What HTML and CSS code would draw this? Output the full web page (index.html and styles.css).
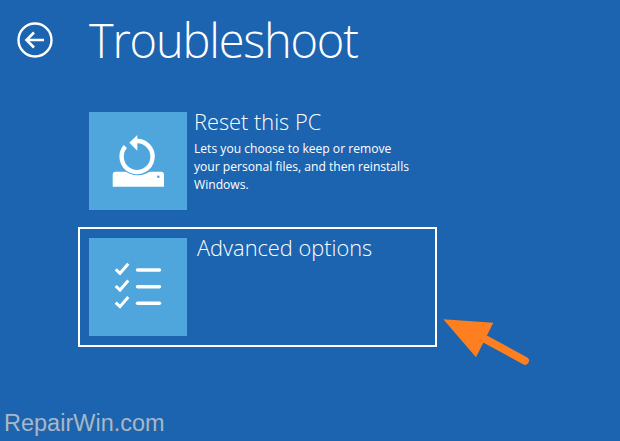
FILE: index.html
```html
<!DOCTYPE html>
<html lang="en">
<head>
  <meta charset="UTF-8">
  <title>Troubleshoot</title>
  <link rel="stylesheet" href="styles.css">
</head>
<body>

  <div class="header">
    <svg class="back" width="36" height="36" viewBox="0 0 36 36">
      <circle cx="18" cy="18" r="16.5" fill="none" stroke="#fff" stroke-width="2.4"/>
      <path d="M27 18H10M17 10.5L9.5 18l7.5 7.5" fill="none" stroke="#fff" stroke-width="2.6"/>
    </svg>
    <h1>Troubleshoot</h1>
  </div>

  <div class="options">
    <div class="option">
      <div class="tile">
        <svg width="98" height="98" viewBox="0 0 98 98">
          <path d="M26.700 59.700H72a3 3 0 0 1 3 3V74.700H23.700V62.700a3 3 0 0 1 3-3z" fill="#fff"/>
          <circle cx="48.700" cy="42.300" r="21" fill="#4ea6dc"/>
          <circle cx="69.300" cy="64.700" r="1.300" fill="#4ea6dc"/>
          <path d="M46 29.200A15.500 15.500 0 1 1 36.300 34.500" fill="none" stroke="#fff" stroke-width="4.400"/>
          <path d="M40.300 30.700L48.300 23V38.700z" fill="#fff"/>
        </svg>
      </div>
      <div class="text">
        <h2>Reset this PC</h2>
        <p>Lets you choose to keep or remove<br>your personal files, and then reinstalls<br>Windows.</p>
      </div>
    </div>

    <div class="option selected">
      <div class="tile">
        <svg width="98" height="98" viewBox="0 0 98 98">
          <g fill="none" stroke="#fff" stroke-width="3">
            <path d="M26.700 31.300L31 35.300 39.300 25.700"/>
            <path d="M26.700 48L31 52 39.300 42.400"/>
            <path d="M26.700 64.700L31 68.700 39.300 59.100"/>
          </g>
          <g fill="none" stroke="#fff" stroke-width="3.400" stroke-linecap="round">
            <path d="M48.500 32H70.500"/>
            <path d="M48.500 48.700H70.500"/>
            <path d="M48.500 65.300H70.500"/>
          </g>
        </svg>
      </div>
      <div class="text">
        <h2>Advanced options</h2>
      </div>
    </div>
  </div>

  <!-- Arrow drawn over the screenshot -->
  <svg class="arrow" width="100" height="60" viewBox="0 0 100 60">
    <path d="M3.300 9.300L53.300 12.700 36 47.300z" fill="#fd7f20"/>
    <path d="M45 29L85 50.700" fill="none" stroke="#fd7f20" stroke-width="8" stroke-linecap="round"/>
  </svg>

  <div class="watermark">RepairWin.com</div>

</body>
</html>
```

FILE: styles.css
```css
body {
  margin: 0;
  height: 441px;
  overflow: hidden;
  position: relative;
  background: #1c64b0;
  color: #fff;
  font-family: "Open Sans", sans-serif;
}

.header {
  display: flex;
  align-items: center;
  gap: 36px;
  height: 80px;
  padding-left: 17px;
}

.back {
  flex: none;
}

h1 {
  margin: 0;
  font-size: 47px;
  font-weight: 300;
  letter-spacing: -1.2px;
  line-height: 80px;
}

.options {
  display: flex;
  flex-direction: column;
  align-items: flex-start;
  gap: 17px;
  margin-top: 32px;
  padding-left: 78px;
}

.option {
  display: flex;
  gap: 7px;
  margin-left: 11px;
}

.option.selected {
  box-sizing: border-box;
  width: 359px;
  height: 120px;
  gap: 10px;
  margin-left: 0;
  padding: 9px;
  border: 2px solid #fff;
}

.tile {
  width: 98px;
  height: 98px;
  background: #4ea6dc;
}

.tile svg {
  display: block;
}

h2 {
  margin: -1px 0 0;
  font-size: 21.8px;
  font-weight: 300;
  line-height: 22px;
}

p {
  margin: 7px 0 0;
  font-size: 12.1px;
  line-height: 18px;
}

.arrow {
  position: absolute;
  left: 440px;
  top: 310px;
}

.watermark {
  position: absolute;
  left: 4px;
  bottom: 4px;
  font-family: "Liberation Sans", sans-serif;
  font-size: 23.5px;
  color: #9fb9d6;
  text-shadow: 1px 1px 1px #3d5f87;
}
```
